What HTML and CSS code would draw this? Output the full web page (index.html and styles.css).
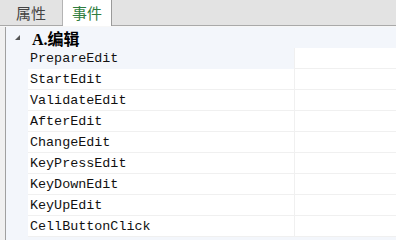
FILE: index.html
```html
<!DOCTYPE html>
<html lang="zh-CN">
<head>
    <meta charset="UTF-8">
    <title>事件</title>
    <link rel="stylesheet" href="styles.css">
</head>
<body>
    <div class="tabs">
        <div class="tab">属性</div>
        <div class="tab active">事件</div>
    </div>

    <div class="grid">
        <div class="row category">
            <span class="toggle"></span>
            <span class="cat-name">A.编辑</span>
        </div>
        <div class="row selected"><span class="name">PrepareEdit</span><span class="value"></span></div>
        <div class="row"><span class="name">StartEdit</span><span class="value"></span></div>
        <div class="row"><span class="name">ValidateEdit</span><span class="value"></span></div>
        <div class="row"><span class="name">AfterEdit</span><span class="value"></span></div>
        <div class="row"><span class="name">ChangeEdit</span><span class="value"></span></div>
        <div class="row"><span class="name">KeyPressEdit</span><span class="value"></span></div>
        <div class="row"><span class="name">KeyDownEdit</span><span class="value"></span></div>
        <div class="row"><span class="name">KeyUpEdit</span><span class="value"></span></div>
        <div class="row"><span class="name">CellButtonClick</span><span class="value"></span></div>
        <div class="row category">
            <span class="toggle"></span>
            <span class="cat-name">B.鼠标</span>
        </div>
    </div>
</body>
</html>
```

FILE: styles.css
```css
body {
    margin: 0;
    background-color: #fff;
    font-family: "Liberation Mono", "Noto Sans CJK SC", monospace;
    overflow: hidden;
}

.tabs {
    display: flex;
    height: 25px;
    background-color: #e3e3e3;
    border-bottom: 1px solid #a9a9a9;
    box-shadow: 0 1px 0 #f7f7f7;
}

.tab {
    width: 62px;
    height: 25px;
    line-height: 25px;
    text-align: center;
    font-family: "Noto Sans CJK SC", sans-serif;
    font-size: 15px;
    color: #444;
    border-right: 1px solid #b4b4b4;
    box-sizing: content-box;
}

.tab.active {
    width: 48px;
    height: 26px;
    background-color: #fff;
    color: #2f7d3e;
    border-right: 1px solid #9a9a9a;
}

.grid {
    margin-top: 1px;
    border-left: 1px solid #a0a0a0;
    margin-left: 5px;
    box-shadow: -5px 0 0 #f0f0f0;
    background-color: #f3f6fb;
}

.row {
    display: flex;
    height: 21px;
    padding-left: 22px;
}

.row .name {
    width: 266px;
    padding-left: 2px;
    line-height: 21px;
    font-size: 13.4px;
    color: #111;
    background-color: #fff;
    border-bottom: 1px solid #f0f0f0;
    box-sizing: border-box;
}

.row .value {
    flex: 1;
    background-color: #fff;
    border-left: 1px solid #f0f0f0;
    border-bottom: 1px solid #f0f0f0;
}

.row.selected .name {
    background-color: #f3f6fb;
    border-bottom-color: #f3f6fb;
}

.row.category {
    padding-left: 0;
    align-items: center;
    background-color: #f3f6fb;
}

.toggle {
    width: 0;
    height: 0;
    margin-left: 9px;
    margin-right: 12px;
    border-left: 5px solid transparent;
    border-bottom: 5px solid #555;
}

.cat-name {
    font-family: "Liberation Serif", "Noto Sans CJK SC", serif;
    font-size: 16px;
    font-weight: bold;
    color: #000;
}
```
